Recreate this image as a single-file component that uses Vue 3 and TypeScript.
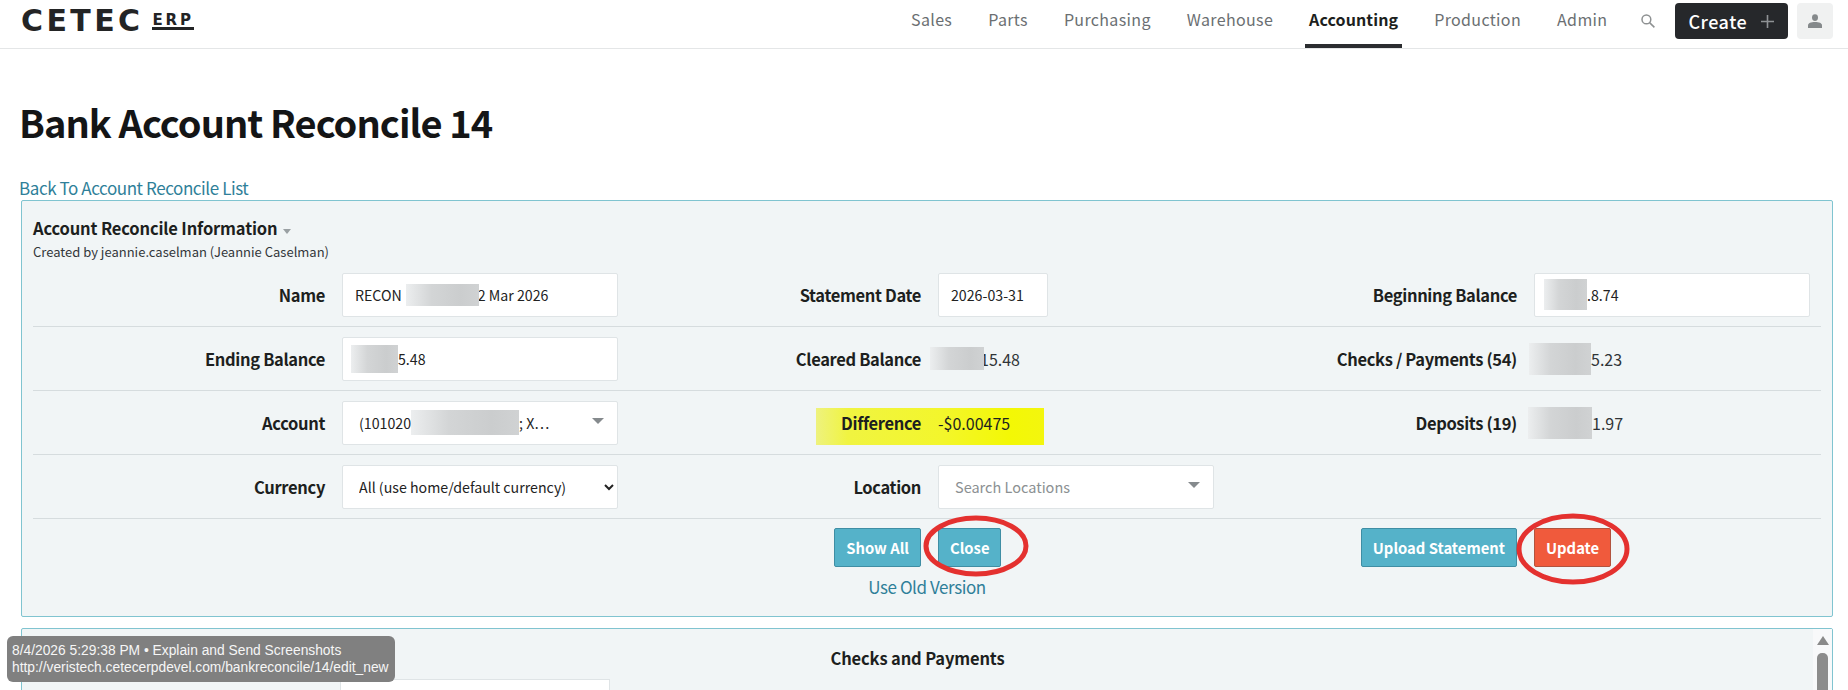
<script setup lang="ts">
const navItems: { label: string; active?: boolean }[] = [
  { label: 'Sales' },
  { label: 'Parts' },
  { label: 'Purchasing' },
  { label: 'Warehouse' },
  { label: 'Accounting', active: true },
  { label: 'Production' },
  { label: 'Admin' },
]
</script>

<template>
  <div class="page">
    <header class="topbar">
      <div class="logo">
        <span class="logo-main">CETEC</span>
        <span class="logo-sub">ERP</span>
      </div>
      <nav class="nav">
        <a v-for="item in navItems" :key="item.label" class="nav-item" :class="{ active: item.active }">{{ item.label }}</a>
      </nav>
      <svg class="search" viewBox="0 0 14 14" width="14" height="14" fill="none" stroke="#8e9192" stroke-width="1.5">
        <circle cx="5.4" cy="5.4" r="4.4" />
        <path d="M8.6 8.6l4.8 4.8" />
      </svg>
      <button class="create">
        <span>Create</span>
        <svg class="plus" viewBox="0 0 13 13" width="13" height="13" fill="none" stroke="#8f9295" stroke-width="1.6">
          <path d="M6.5 0v13M0 6.5h13" />
        </svg>
      </button>
      <div class="avatar">
        <svg viewBox="0 0 14 14" width="14" height="14" fill="#85898b">
          <ellipse cx="7" cy="3.6" rx="3" ry="3.4" />
          <path d="M0 14v-2.6c0-2.2 3-3.4 7-3.4s7 1.2 7 3.4V14z" />
        </svg>
      </div>
    </header>

    <main class="content">
      <h1 class="title">Bank Account Reconcile 14</h1>
      <a class="back-link">Back To Account Reconcile List</a>

      <section class="panel">
        <div class="panel-head">
          <div class="panel-title">Account Reconcile Information <span class="caret-small"></span></div>
          <div class="created">Created by jeannie.caselman (Jeannie Caselman)</div>
        </div>

        <div class="row">
          <div class="cell">
            <label class="lbl">Name</label>
            <div class="field">RECON<span class="blur b-name"></span>2 Mar 2026</div>
          </div>
          <div class="cell">
            <label class="lbl">Statement Date</label>
            <div class="field short">2026-03-31</div>
          </div>
          <div class="cell">
            <label class="lbl">Beginning Balance</label>
            <div class="field tight"><span class="blur b-begin"></span>.8.74</div>
          </div>
        </div>

        <div class="row">
          <div class="cell">
            <label class="lbl">Ending Balance</label>
            <div class="field tight"><span class="blur b-end"></span>5.48</div>
          </div>
          <div class="cell">
            <label class="lbl">Cleared Balance</label>
            <div class="value"><span class="blur b-cleared"></span>15.48</div>
          </div>
          <div class="cell">
            <label class="lbl">Checks / Payments (54)</label>
            <div class="value"><span class="blur b-checks"></span>5.23</div>
          </div>
        </div>

        <div class="row">
          <div class="cell">
            <label class="lbl">Account</label>
            <div class="field combo">(101020<span class="blur b-account"></span>; X…<span class="tri"></span></div>
          </div>
          <div class="cell diff-cell">
            <div class="highlight"></div>
            <label class="lbl">Difference</label>
            <div class="value plain">-$0.00475</div>
          </div>
          <div class="cell">
            <label class="lbl">Deposits (19)</label>
            <div class="value"><span class="blur b-deposits"></span>1.97</div>
          </div>
        </div>

        <div class="row">
          <div class="cell">
            <label class="lbl">Currency</label>
            <select class="field native">
              <option>All (use home/default currency)</option>
            </select>
          </div>
          <div class="cell">
            <label class="lbl">Location</label>
            <div class="field combo placeholder">Search Locations<span class="tri"></span></div>
          </div>
          <div class="cell"></div>
        </div>

        <div class="row actions">
          <div class="cell"></div>
          <div class="cell action-cell">
            <div class="left-btn"><button class="btn teal">Show All</button></div>
            <div class="ring-wrap">
              <button class="btn teal">Close</button>
              <svg class="ring ring-close" viewBox="0 0 106 62" fill="none">
                <ellipse cx="53" cy="31" rx="50" ry="28" stroke="#e4312f" stroke-width="5" />
              </svg>
            </div>
          </div>
          <div class="cell action-cell">
            <div class="left-btn"><button class="btn teal">Upload Statement</button></div>
            <div class="ring-wrap">
              <button class="btn red">Update</button>
              <svg class="ring ring-update" viewBox="0 0 114 72" fill="none">
                <ellipse cx="57" cy="36" rx="54" ry="33" stroke="#e4312f" stroke-width="5" />
              </svg>
            </div>
          </div>
        </div>

        <div class="row-old">
          <div></div>
          <a class="old-link">Use Old Version</a>
          <div></div>
        </div>
      </section>

      <section class="panel second">
        <div class="second-main">
          <h2 class="second-title">Checks and Payments</h2>
          <div class="second-input"></div>
        </div>
        <div class="scrollbar">
          <span class="sb-arrow"></span>
          <span class="sb-thumb"></span>
        </div>
      </section>
    </main>

    <div class="toast">
      <div>8/4/2026 5:29:38 PM • Explain and Send Screenshots</div>
      <div>http://veristech.cetecerpdevel.com/bankreconcile/14/edit_new</div>
    </div>
  </div>
</template>

<style>
html,
body {
  margin: 0;
  background: #fff;
  overflow: hidden;
}
</style>

<style scoped>
* {
  box-sizing: border-box;
}
.page {
  position: relative;
  width: 1848px;
  height: 690px;
  overflow: hidden;
  background: #fff;
  color: #1d1f20;
  font-family: "Noto Sans CJK SC", "Noto Sans", sans-serif;
}
.topbar {
  height: 49px;
  border-bottom: 1px solid #e4e6e7;
  display: flex;
  align-items: flex-start;
  padding-left: 21px;
}
.logo {
  display: flex;
  align-items: flex-start;
  width: 886px;
  height: 48px;
  padding-top: 5px;
}
.logo-main {
  font-family: "DejaVu Sans", sans-serif;
  font-weight: 700;
  font-size: 30px;
  line-height: 32px;
  letter-spacing: 3.4px;
  color: #232425;
}
.logo-sub {
  margin-left: 9px;
  margin-top: 7px;
  font-family: "DejaVu Sans", sans-serif;
  font-weight: 700;
  font-size: 15px;
  line-height: 16px;
  letter-spacing: 2.8px;
  color: #232425;
  border-bottom: 3px solid #232425;
  width: 42px;
  height: 18px;
  white-space: nowrap;
}
.nav {
  display: flex;
  gap: 28px;
  height: 48px;
}
.nav-item {
  height: 48px;
  padding: 0 4px;
  font-size: 16px;
  line-height: 38px;
  letter-spacing: 0.35px;
  color: #6b6f72;
}
.nav-item.active {
  color: #1d1f20;
  font-weight: 600;
  letter-spacing: 0.1px;
  border-bottom: 4px solid #2b2d30;
}
.search {
  margin: 14px 0 0 30px;
}
.create {
  margin: 3px 0 0 20px;
  width: 113px;
  height: 36px;
  border: 0;
  border-radius: 4px;
  background: #26282b;
  color: #fff;
  font-family: inherit;
  font-size: 18px;
  font-weight: 500;
  line-height: 34px;
  padding: 0 0 0 13px;
  letter-spacing: 0.5px;
  display: flex;
  align-items: center;
}
.plus {
  margin-left: 14px;
}
.avatar {
  margin: 3px 0 0 9px;
  width: 36px;
  height: 36px;
  border-radius: 4px;
  background: #f0f1f1;
  display: flex;
  align-items: center;
  justify-content: center;
}
.content {
  padding: 0 15px 0 19px;
}
.title {
  margin: 45px 0 0 0;
  font-size: 38px;
  line-height: 56px;
  font-weight: 700;
  letter-spacing: -0.95px;
  color: #141516;
}
.back-link {
  display: block;
  margin-top: 25px;
  font-size: 17px;
  line-height: 25px;
  letter-spacing: -0.42px;
  color: #2f7f99;
}
.panel {
  margin-left: 2px;
  border: 1px solid #80c4d0;
  border-radius: 2px;
  background: #f1f5f6;
}
.panel-head {
  padding: 16px 11px 0;
  height: 62px;
}
.panel-title {
  font-size: 16.5px;
  line-height: 22px;
  font-weight: 600;
  letter-spacing: -0.15px;
  color: #1d1f20;
}
.caret-small {
  display: inline-block;
  margin-left: 2px;
  border: 4px solid transparent;
  border-top: 5px solid #9aa0a3;
  border-bottom: 0;
  vertical-align: 1px;
}
.created {
  font-size: 13px;
  line-height: 18px;
  margin-top: 4px;
  color: #33373a;
}
.row {
  margin: 0 11px;
  height: 64px;
  display: grid;
  grid-template-columns: repeat(3, 596px);
  border-bottom: 1px solid #d6dcde;
}
.row.actions {
  border-bottom: 0;
  height: 54px;
}
.cell {
  position: relative;
  display: grid;
  grid-template-columns: 292px 276px;
  column-gap: 17px;
  align-items: center;
}
.lbl {
  position: relative;
  text-align: right;
  font-size: 16.5px;
  font-weight: 600;
  letter-spacing: -0.35px;
  color: #1d1f20;
  white-space: nowrap;
}
.field {
  height: 44px;
  width: 276px;
  background: #fff;
  border: 1px solid #dfe4e6;
  border-radius: 2px;
  font-size: 14.2px;
  line-height: 42px;
  padding: 0 12px;
  color: #222;
  display: flex;
  align-items: center;
  white-space: nowrap;
  font-family: inherit;
}
.field.short {
  width: 110px;
}
.field.tight {
  padding-left: 8px;
}
.field.combo {
  position: relative;
  padding-left: 16px;
}
.placeholder {
  color: #8b9092;
  font-size: 14.5px;
}
.native {
  padding: 0 0 0 12px;
  appearance: auto;
}
.tri {
  position: absolute;
  right: 13px;
  top: 16px;
  border: 6px solid transparent;
  border-top: 6px solid #858a8d;
  border-bottom: 0;
}
.blur {
  position: relative;
  z-index: 1;
  display: inline-block;
  flex: none;
  background: linear-gradient(90deg, #eceeef, #d3d5d6 35%, #cbcdce 75%, #d0d2d3);
}
.b-name {
  width: 73px;
  height: 22px;
  margin: 0 -1px 0 4px;
}
.b-begin {
  width: 43px;
  height: 31px;
  margin-left: 1px;
}
.b-end {
  width: 47px;
  height: 28px;
}
.b-cleared {
  width: 54px;
  height: 23px;
  margin-right: -4px;
}
.b-checks {
  width: 62px;
  height: 32px;
  margin-left: 3px;
}
.b-account {
  width: 108px;
  height: 25px;
}
.b-deposits {
  width: 64px;
  height: 32px;
  margin-left: 2px;
}
.value {
  display: flex;
  align-items: center;
  font-size: 16px;
  color: #303437;
  margin-left: -8px;
  white-space: nowrap;
}
.value.plain {
  position: relative;
  margin-left: 0;
  color: #1d1f20;
}
.highlight {
  position: absolute;
  left: 187px;
  top: 17px;
  width: 228px;
  height: 37px;
  background: linear-gradient(90deg, #eef27e 0, #f0f441 14%, #f3f62c 55%, #f3f805 85%, #f3f60e 100%);
}
.action-cell {
  align-items: start;
  padding-top: 9px;
}
.left-btn {
  display: flex;
  justify-content: flex-end;
}
.ring-wrap {
  position: relative;
  display: flex;
}
.btn {
  height: 39px;
  padding: 0 11px;
  border-radius: 2px;
  color: #fff;
  font-family: inherit;
  font-size: 14.8px;
  font-weight: 600;
  cursor: pointer;
  white-space: nowrap;
}
.teal {
  background: #55b2c9;
  border: 1px solid #3f8ea4;
}
.red {
  background: #f05a3c;
  border: 1px solid #b2533e;
}
.ring {
  position: absolute;
  pointer-events: none;
}
.ring-close {
  left: -15px;
  top: -13px;
  width: 106px;
  height: 62px;
}
.ring-update {
  left: -18px;
  top: -15px;
  width: 114px;
  height: 72px;
}
.row-old {
  margin: 0 11px;
  height: 43px;
  padding-top: 2px;
  display: grid;
  grid-template-columns: repeat(3, 596px);
}
.old-link {
  text-align: center;
  font-size: 17px;
  line-height: 24px;
  letter-spacing: -0.42px;
  color: #2f7f99;
  width: 596px;
}
.second {
  margin-top: 11px;
  height: 80px;
  display: flex;
}
.second-main {
  flex: 1;
  padding-top: 18px;
}
.second-title {
  margin: 0;
  text-align: center;
  font-size: 16.5px;
  line-height: 22px;
  font-weight: 600;
  letter-spacing: -0.15px;
}
.second-input {
  margin: 10px 0 0 318px;
  width: 270px;
  height: 44px;
  background: #fff;
  border: 1px solid #dfe4e6;
}
.scrollbar {
  width: 19px;
  background: #f8f9fa;
  padding-top: 7px;
  display: flex;
  flex-direction: column;
  align-items: center;
}
.sb-arrow {
  width: 0;
  border: 6px solid transparent;
  border-bottom: 9px solid #8a8a8a;
  border-top: 0;
}
.sb-thumb {
  margin-top: 8px;
  width: 11px;
  height: 60px;
  border-radius: 5px;
  background: #8c8c8c;
}
.toast {
  position: absolute;
  left: 7px;
  top: 636px;
  width: 388px;
  height: 46px;
  padding: 6px 0 0 5px;
  border-radius: 6px;
  background: #808080;
  color: #f6f6f6;
  font-family: "Liberation Sans", Arial, sans-serif;
  font-size: 13.8px;
  line-height: 17px;
  white-space: nowrap;
}
</style>
